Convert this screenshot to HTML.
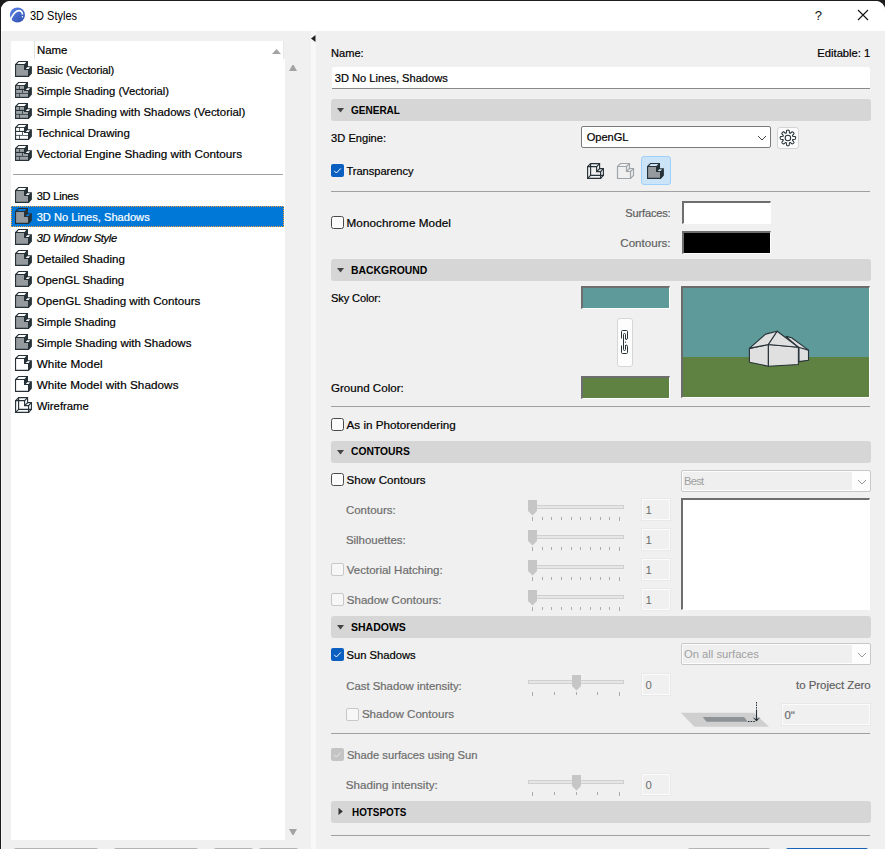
<!DOCTYPE html>
<html><head><meta charset="utf-8"><style>
html,body{margin:0;padding:0}
body{width:885px;height:849px;overflow:hidden;position:relative;background:#1c1c1c;font-family:"Liberation Sans",sans-serif}
.win{position:absolute;left:1px;top:1px;width:884px;height:848px;background:#f0f0f0;border-radius:9px 9px 0 0;overflow:hidden}
.a{position:absolute}
.t{position:absolute;white-space:pre;line-height:normal;-webkit-text-stroke:0.2px currentColor}
.b{-webkit-text-stroke:0}
.ic{position:absolute;overflow:visible}
.hdr{position:absolute;left:331px;width:540px;height:21.5px;background:#d6d6d6;border-radius:3px}
.sep{position:absolute;left:331px;width:539px;height:1px;background:#a0a0a0}
.cb{position:absolute;width:11px;height:11px;border:1px solid #4a4a4a;border-radius:2.5px;background:#fbfbfb}
.cbon{position:absolute;width:13px;height:13px;border-radius:2px;background:#0a5fc0}
.cbdis{position:absolute;width:11px;height:11px;border:1px solid #c8c8c8;border-radius:2px;background:#f7f7f7}
.track{position:absolute;width:94px;height:2px;background:#e6e6e6;border:1px solid #d0d0d0}
.tick{position:absolute;width:1px;background:#ababab}
.edit{position:absolute;box-sizing:border-box;border:1px solid #fbfbfb;background:#f0f0f0;box-shadow:0 0 0 1px #e9e9e9}
.tri{position:absolute;width:0;height:0}
</style></head><body>
<div class="win">
  <!-- title bar -->
  <div class="a" style="left:0;top:0;width:884px;height:30px;background:#fff"></div>
</div>
<div class="a" style="left:1px;top:31px;width:1px;height:818px;background:#f8f8f8"></div>
<!-- app icon -->
<svg class="ic" style="left:0;top:0" width="40" height="31" viewBox="0 0 40 31">
<defs><linearGradient id="g1" x1="0" y1="0" x2="1" y2="1"><stop offset="0" stop-color="#5a82e6"/><stop offset="1" stop-color="#2f4fae"/></linearGradient></defs>
<circle cx="17.45" cy="14.9" r="7.5" fill="url(#g1)"/>
<path d="M10.3,20C12.3,15.6 15.2,11 18.6,10.7C21.2,10.5 22.6,12.4 22.4,14.6" fill="none" stroke="#fff" stroke-width="1.7"/>
<circle cx="22.4" cy="16.7" r="0.8" fill="#fff"/>
</svg>
<!-- ? and X -->
<div class="t b" style="left:814.8px;top:8.23px;font-size:13px;color:#111">?</div>
<svg class="ic" style="left:857px;top:9px" width="12" height="12" viewBox="0 0 12 12"><path d="M1,1L11,11M11,1L1,11" stroke="#111" stroke-width="1.1"/></svg>

<!-- left list -->
<div class="a" style="left:11px;top:59px;width:274px;height:781px;background:#fff"></div>
<div class="a" style="left:11px;top:41px;width:272px;height:18px;background:#fff"></div>
<div class="a" style="left:283px;top:41px;width:1px;height:18px;background:#e8e8e8"></div>
<div class="a" style="left:34px;top:41px;width:1px;height:18px;background:#e3e3e3"></div>
<svg class="ic" style="left:271px;top:48px" width="11" height="7" viewBox="0 0 11 7"><path d="M1,6L5.5,1L10,6Z" fill="#a3a3a3"/></svg>
<svg class="ic" style="left:288px;top:64px" width="10" height="8" viewBox="0 0 10 8"><path d="M1,7L4.4,1.1H5.6L9,7Z" fill="#a3a3a3"/></svg>
<svg class="ic" style="left:288px;top:828px" width="10" height="8" viewBox="0 0 10 8"><path d="M1,1H9L5.6,6.9H4.4Z" fill="#a3a3a3"/></svg>
<div class="a" style="left:13px;top:174px;width:270px;height:1px;background:#a0a0a0"></div>
<div class="a" style="left:11px;top:206px;width:273px;height:21px;background:#0078d7;box-sizing:border-box;border:1px dotted #f7a13a"></div>
<!-- splitter -->
<div class="a" style="left:311px;top:31px;width:5px;height:818px;background:#f8f8f8"></div>
<svg class="ic" style="left:310px;top:34px" width="7" height="9" viewBox="0 0 7 9"><path d="M1,4.5L5.5,1V8Z" fill="#222"/></svg>
<!-- bottom buttons -->
<div class="a" style="left:14px;top:848px;width:84px;height:4px;background:#b4b4b4;border-radius:3px"></div>
<div class="a" style="left:114px;top:848px;width:84px;height:4px;background:#b4b4b4;border-radius:3px"></div>
<div class="a" style="left:214px;top:848px;width:39px;height:4px;background:#b4b4b4;border-radius:3px"></div>
<div class="a" style="left:259px;top:848px;width:39px;height:4px;background:#b4b4b4;border-radius:3px"></div>
<div class="a" style="left:688px;top:848px;width:82px;height:4px;background:#b4b4b4;border-radius:3px"></div>
<div class="a" style="left:786px;top:848px;width:82px;height:4px;background:#1a64b8;border-radius:3px"></div>

<!-- right panel -->
<div class="a" style="left:332px;top:67px;width:538px;height:21px;background:#fff;border-bottom:1px solid #8a8a8a;border-radius:2px 2px 0 0;box-sizing:content-box"></div>
<div class="hdr" style="top:99px"></div>
<svg class="ic" style="left:336px;top:107px" width="9" height="6" viewBox="0 0 9 6"><path d="M1,1H8L4.5,5.5Z" fill="#444"/></svg>
<!-- engine dropdown -->
<div class="a" style="left:581px;top:126px;width:188px;height:20px;background:#fff;border:1px solid #7a7a7a;border-radius:2px"></div>
<svg class="ic" style="left:757px;top:135px" width="10" height="6" viewBox="0 0 10 6"><path d="M1,1L5,5L9,1" fill="none" stroke="#444" stroke-width="1"/></svg>
<div class="a" style="left:777px;top:127px;width:20px;height:20px;background:#fcfcfc;border:1px solid #d4d4d4;border-radius:3px"></div>
<svg class="ic" style="left:776px;top:126px" width="24" height="24" viewBox="0 0 24 24" id="gear"><path d="M10.33,6.84L10.63,4.51Q11.90,3.50 13.17,4.51L13.47,6.84Q13.70,7.56 14.37,7.21L16.23,5.78Q17.84,5.96 18.02,7.57L16.59,9.43Q16.24,10.10 16.96,10.33L19.29,10.63Q20.30,11.90 19.29,13.17L16.96,13.47Q16.24,13.70 16.59,14.37L18.02,16.23Q17.84,17.84 16.23,18.02L14.37,16.59Q13.70,16.24 13.47,16.96L13.17,19.29Q11.90,20.30 10.63,19.29L10.33,16.96Q10.10,16.24 9.43,16.59L7.57,18.02Q5.96,17.84 5.78,16.23L7.21,14.37Q7.56,13.70 6.84,13.47L4.51,13.17Q3.50,11.90 4.51,10.63L6.84,10.33Q7.56,10.10 7.21,9.43L5.78,7.57Q5.96,5.96 7.57,5.78L9.43,7.21Q10.10,7.56 10.33,6.84Z" fill="none" stroke="#263238" stroke-width="1.05" stroke-linejoin="round"/><circle cx="11.9" cy="11.9" r="2.75" fill="none" stroke="#263238" stroke-width="1.05"/></svg>
<div class="cbon" style="left:331px;top:164px"><svg width="13" height="13" viewBox="0 0 13 13" style="position:absolute;left:0;top:0"><path d="M3.2,6.8L5.4,9L9.8,4.4" fill="none" stroke="#fff" stroke-width="1"/></svg></div>
<svg class="ic" style="left:584px;top:160px" width="24" height="24" viewBox="0 0 24 24"><g fill="none" stroke="#263238" stroke-width="1.15">
<path d="M3.6,6.6H12.6V11.6H16.6V18.4H3.6Z"/><path d="M6.6,3.6H15.6V8.6H19.4V15.4H6.6Z"/>
<path d="M3.6,6.6L6.6,3.6M12.6,6.6L15.6,3.6M12.6,11.6L15.6,8.6M16.6,11.6L19.4,8.6M16.6,18.4L19.4,15.4M3.6,18.4L6.6,15.4"/></g></svg><svg class="ic" style="left:614px;top:160px" width="24" height="24" viewBox="0 0 24 24"><g fill="none" stroke="#a0a5a9" stroke-width="1.2">
<path d="M3.5,6.5L6.5,3.5H15.5V8.5H19.5V15.5L16.5,18.5H3.5Z"/><path fill="none" d="M3.5,6.5H12.5V11.5H16.5V18.5M12.5,6.5L15.5,3.5M12.5,11.5L15.5,8.5M16.5,11.5L19.5,8.5"/></g></svg>
<div class="a" style="left:641px;top:156px;width:28px;height:27px;background:#cce4f7;border:1px solid #9fd0fb;border-radius:3px"></div>
<svg class="ic" style="left:644px;top:160px" width="24" height="24" viewBox="0 0 24 24"><path fill="#263238" d="M3,6.3L6.3,3H16V8.3H19.9V15.5L16.8,18.9H3Z"/>
<path fill="#cce4f7" d="M5.1,5.9L6.8,4.1H14.2L12.5,5.9Z"/><path fill="#cce4f7" d="M13.8,10.9L15.3,9.2H18.1L16.6,10.9Z"/><path fill="#959a9e" d="M4.1,6.9H12V12.1H16V17.8H4.1Z"/></svg>
<div class="sep" style="top:191px"></div>
<div class="cb" style="left:331px;top:216px"></div>
<div class="a" style="left:682px;top:201px;width:86px;height:20px;background:#fff;border-top:2px solid #6e6e6e;border-left:2px solid #6e6e6e;border-right:1px solid #fff;border-bottom:1px solid #fff"></div>
<div class="a" style="left:682px;top:231px;width:86px;height:20px;background:#000;border-top:2px solid #6e6e6e;border-left:2px solid #6e6e6e;border-right:1px solid #fff;border-bottom:1px solid #fff"></div>
<div class="hdr" style="top:259px"></div>
<svg class="ic" style="left:336px;top:267px" width="9" height="6" viewBox="0 0 9 6"><path d="M1,1H8L4.5,5.5Z" fill="#444"/></svg>
<div class="a" style="left:581px;top:286px;width:86px;height:19.5px;background:#5e9a9a;border-top:2px solid #6e6e6e;border-left:2px solid #6e6e6e;border-right:1px solid #fff;border-bottom:1px solid #fff"></div>
<div class="a" style="left:581px;top:376px;width:86px;height:19.5px;background:#5f8243;border-top:2px solid #6e6e6e;border-left:2px solid #6e6e6e;border-right:1px solid #fff;border-bottom:1px solid #fff"></div>
<div class="a" style="left:617px;top:318px;width:14px;height:47px;background:#fdfdfd;border:1px solid #d6d6d6;border-radius:3px"></div>
<svg class="ic" style="left:0;top:0" width="885" height="849" viewBox="0 0 885 849" id="overlay"></svg>
<div class="a" style="left:681px;top:286px;width:186px;height:109px;background:#5e9a9a;border-top:2px solid #6b6b6b;border-left:2px solid #6b6b6b;border-right:1px solid #fff;border-bottom:1px solid #fff;overflow:hidden">
  <div class="a" style="left:0;top:69px;width:186px;height:41px;background:#5f8243"></div>
</div>
<svg class="ic" style="left:0;top:0" width="885" height="849" viewBox="0 0 885 849">
<g fill="#e0e0e0" stroke="#263238" stroke-width="1.1" stroke-linejoin="round">
<path d="M787,337.5L786.2,336.4L791.6,337.7L808.5,350.1V360.3L799,361.6V348Z"/><path d="M798.4,347.3L808.5,350.1" fill="none"/>
<path d="M749.4,348.4L768.4,344.5V366.2L749.4,362.2Z"/>
<path d="M768.4,344.5L798.4,347.3V364.5L768.4,366.2Z"/>
<path d="M749.4,348.4L765.6,334.1L777.2,331.2L768.4,344.5Z"/>
<path d="M768.4,344.5L777.2,331.2L798.4,347.3Z"/>
</g>
<!-- chain -->
<g fill="none" stroke="#263238" stroke-width="1">
<path d="M621.5,338.5V331.5Q621.5,330.5 622.5,330.5H626.5Q627.5,330.5 627.5,331.5V338Q627.5,339.5 626,339.5"/>
<path d="M621.5,345.5V352.5Q621.5,353.5 622.5,353.5H626.5Q627.5,353.5 627.5,352.5V346.5Q627.5,345 626,345"/>
<path d="M625.5,339.5V334.5Q625.5,333.5 624.5,333.5Q623.5,333.5 623.5,334.5V349.5Q623.5,350.5 624.5,350.5Q625.5,350.5 625.5,349.5V345"/>
</g>
<circle cx="625.5" cy="342.2" r="0.6" fill="#263238"/>
</svg>
<div class="sep" style="top:406px"></div>
<div class="cb" style="left:331px;top:418px"></div>
<div class="hdr" style="top:441px"></div>
<svg class="ic" style="left:336px;top:449px" width="9" height="6" viewBox="0 0 9 6"><path d="M1,1H8L4.5,5.5Z" fill="#444"/></svg>
<div class="cb" style="left:331px;top:473px"></div>
<div class="a" style="left:681px;top:470px;width:188px;height:20px;background:#fdfdfd;border:1px solid #c8c8c8;border-radius:2px"></div>
<div class="a" style="left:683px;top:472px;width:169px;height:18px;background:#efefef"></div>
<svg class="ic" style="left:857px;top:479px" width="10" height="6" viewBox="0 0 10 6"><path d="M1,1L5,5L9,1" fill="none" stroke="#9a9a9a" stroke-width="1"/></svg>
<div class="a" style="left:681px;top:498px;width:186px;height:109px;background:#fff;border-top:2px solid #6e6e6e;border-left:2px solid #6e6e6e;border-right:1px solid #fff;border-bottom:1px solid #fff"></div>
<div class="cbdis" style="left:331px;top:563px"></div>
<div class="cbdis" style="left:331px;top:593px"></div>
<div class="track" style="left:528px;top:505px"></div><svg class="ic" style="left:528px;top:500px" width="9" height="16" viewBox="0 0 9 16"><path d="M0,0H9V11L4.5,15.5L0,11Z" fill="#c6c6c6"/></svg><div class="tick" style="left:532.0px;top:517px;height:3.5px"></div><div class="tick" style="left:542.0px;top:517px;height:2.5px"></div><div class="tick" style="left:551.0px;top:517px;height:2.5px"></div><div class="tick" style="left:561.0px;top:517px;height:2.5px"></div><div class="tick" style="left:571.0px;top:517px;height:2.5px"></div><div class="tick" style="left:580.0px;top:517px;height:2.5px"></div><div class="tick" style="left:590.0px;top:517px;height:2.5px"></div><div class="tick" style="left:600.0px;top:517px;height:2.5px"></div><div class="tick" style="left:609.0px;top:517px;height:2.5px"></div><div class="tick" style="left:619.0px;top:517px;height:3.5px"></div><div class="edit" style="left:642px;top:499px;width:28px;height:21px"></div><div class="track" style="left:528px;top:535px"></div><svg class="ic" style="left:528px;top:530px" width="9" height="16" viewBox="0 0 9 16"><path d="M0,0H9V11L4.5,15.5L0,11Z" fill="#c6c6c6"/></svg><div class="tick" style="left:532.0px;top:547px;height:3.5px"></div><div class="tick" style="left:542.0px;top:547px;height:2.5px"></div><div class="tick" style="left:551.0px;top:547px;height:2.5px"></div><div class="tick" style="left:561.0px;top:547px;height:2.5px"></div><div class="tick" style="left:571.0px;top:547px;height:2.5px"></div><div class="tick" style="left:580.0px;top:547px;height:2.5px"></div><div class="tick" style="left:590.0px;top:547px;height:2.5px"></div><div class="tick" style="left:600.0px;top:547px;height:2.5px"></div><div class="tick" style="left:609.0px;top:547px;height:2.5px"></div><div class="tick" style="left:619.0px;top:547px;height:3.5px"></div><div class="edit" style="left:642px;top:529px;width:28px;height:21px"></div><div class="track" style="left:528px;top:565px"></div><svg class="ic" style="left:528px;top:560px" width="9" height="16" viewBox="0 0 9 16"><path d="M0,0H9V11L4.5,15.5L0,11Z" fill="#c6c6c6"/></svg><div class="tick" style="left:532.0px;top:577px;height:3.5px"></div><div class="tick" style="left:542.0px;top:577px;height:2.5px"></div><div class="tick" style="left:551.0px;top:577px;height:2.5px"></div><div class="tick" style="left:561.0px;top:577px;height:2.5px"></div><div class="tick" style="left:571.0px;top:577px;height:2.5px"></div><div class="tick" style="left:580.0px;top:577px;height:2.5px"></div><div class="tick" style="left:590.0px;top:577px;height:2.5px"></div><div class="tick" style="left:600.0px;top:577px;height:2.5px"></div><div class="tick" style="left:609.0px;top:577px;height:2.5px"></div><div class="tick" style="left:619.0px;top:577px;height:3.5px"></div><div class="edit" style="left:642px;top:559px;width:28px;height:21px"></div><div class="track" style="left:528px;top:595px"></div><svg class="ic" style="left:528px;top:590px" width="9" height="16" viewBox="0 0 9 16"><path d="M0,0H9V11L4.5,15.5L0,11Z" fill="#c6c6c6"/></svg><div class="tick" style="left:532.0px;top:607px;height:3.5px"></div><div class="tick" style="left:542.0px;top:607px;height:2.5px"></div><div class="tick" style="left:551.0px;top:607px;height:2.5px"></div><div class="tick" style="left:561.0px;top:607px;height:2.5px"></div><div class="tick" style="left:571.0px;top:607px;height:2.5px"></div><div class="tick" style="left:580.0px;top:607px;height:2.5px"></div><div class="tick" style="left:590.0px;top:607px;height:2.5px"></div><div class="tick" style="left:600.0px;top:607px;height:2.5px"></div><div class="tick" style="left:609.0px;top:607px;height:2.5px"></div><div class="tick" style="left:619.0px;top:607px;height:3.5px"></div><div class="edit" style="left:642px;top:589px;width:28px;height:21px"></div><div class="track" style="left:528px;top:680px"></div><svg class="ic" style="left:572px;top:675px" width="9" height="16" viewBox="0 0 9 16"><path d="M0,0H9V11L4.5,15.5L0,11Z" fill="#c6c6c6"/></svg><div class="tick" style="left:532.0px;top:692px;height:3.5px"></div><div class="tick" style="left:554.0px;top:692px;height:2.5px"></div><div class="tick" style="left:576.0px;top:692px;height:2.5px"></div><div class="tick" style="left:597.0px;top:692px;height:2.5px"></div><div class="tick" style="left:619.0px;top:692px;height:3.5px"></div><div class="edit" style="left:642px;top:674px;width:28px;height:21px"></div><div class="track" style="left:528px;top:780px"></div><svg class="ic" style="left:572px;top:775px" width="9" height="16" viewBox="0 0 9 16"><path d="M0,0H9V11L4.5,15.5L0,11Z" fill="#c6c6c6"/></svg><div class="tick" style="left:532.0px;top:792px;height:3.5px"></div><div class="tick" style="left:554.0px;top:792px;height:2.5px"></div><div class="tick" style="left:576.0px;top:792px;height:2.5px"></div><div class="tick" style="left:597.0px;top:792px;height:2.5px"></div><div class="tick" style="left:619.0px;top:792px;height:3.5px"></div><div class="edit" style="left:642px;top:774px;width:28px;height:21px"></div>
<div class="hdr" style="top:616px"></div>
<svg class="ic" style="left:336px;top:624px" width="9" height="6" viewBox="0 0 9 6"><path d="M1,1H8L4.5,5.5Z" fill="#444"/></svg>
<div class="cbon" style="left:331px;top:648px"><svg width="13" height="13" viewBox="0 0 13 13" style="position:absolute;left:0;top:0"><path d="M3.2,6.8L5.4,9L9.8,4.4" fill="none" stroke="#fff" stroke-width="1"/></svg></div>
<div class="a" style="left:681px;top:643px;width:188px;height:20px;background:#fdfdfd;border:1px solid #c8c8c8;border-radius:2px"></div>
<div class="a" style="left:683px;top:645px;width:169px;height:18px;background:#efefef"></div>
<svg class="ic" style="left:857px;top:652px" width="10" height="6" viewBox="0 0 10 6"><path d="M1,1L5,5L9,1" fill="none" stroke="#9a9a9a" stroke-width="1"/></svg>
<div class="cbdis" style="left:346px;top:708px"></div>
<svg class="ic" style="left:0;top:0" width="885" height="849" viewBox="0 0 885 849">
<path d="M680.9,712.7H753.8L769.1,726.8H694.3Z" fill="#cfcfcf"/>
<path d="M702.8,716.9H744.1L747.7,721.7H706.4Z" fill="#8d9296"/>
<path d="M756.5,702V710" stroke="#263238" stroke-width="1" stroke-dasharray="1.5,1"/>
<path d="M756.5,710V720" stroke="#263238" stroke-width="1.1"/>
<path d="M748,721.5H755" stroke="#263238" stroke-width="1" stroke-dasharray="1.6,1"/>
<path d="M752.6,717.3L756.5,721.6L760.4,717.3L756.5,719.2Z" fill="#263238"/>
</svg>
<div class="edit" style="left:782px;top:704px;width:88px;height:21px"></div>
<div class="sep" style="top:733px"></div>
<div class="a" style="left:331px;top:748px;width:13px;height:13px;background:#c4c4c4;border-radius:2px"><svg width="13" height="13" viewBox="0 0 13 13" style="position:absolute;left:0;top:0"><path d="M3.2,6.8L5.4,9L9.8,4.4" fill="none" stroke="#e8e8e8" stroke-width="1"/></svg></div>
<div class="hdr" style="top:801px"></div>
<svg class="ic" style="left:337px;top:807px" width="7" height="9" viewBox="0 0 7 9"><path d="M1.5,0.8L5.8,4.4L1.5,8Z" fill="#333"/></svg>
<div class="sep" style="top:835px"></div>

<svg class="ic" style="left:12px;top:58px" width="24" height="24" viewBox="0 0 24 24"><path fill="#263238" d="M3,6.3L6.3,3H16V8.3H19.9V15.5L16.8,18.9H3Z"/>
<path fill="#fff" d="M5.1,5.9L6.8,4.1H14.2L12.5,5.9Z"/><path fill="#fff" d="M13.8,10.9L15.3,9.2H18.1L16.6,10.9Z"/><path fill="#959a9e" d="M4.1,6.9H12V12.1H16V17.8H4.1Z"/></svg><svg class="ic" style="left:12px;top:79px" width="24" height="24" viewBox="0 0 24 24"><path fill="#263238" d="M3,6.3L6.3,3H16V8.3H19.9V15.5L16.8,18.9H3Z"/>
<path fill="#fff" d="M5.1,5.9L6.8,4.1H14.2L12.5,5.9Z"/><path fill="#fff" d="M13.8,10.9L15.3,9.2H18.1L16.6,10.9Z"/><g fill="#9da2a6"><rect x="4.1" y="6.9" width="3.1" height="3"/><rect x="7.9" y="6.9" width="4.1" height="3"/>
<rect x="4.1" y="11" width="6.1" height="2.9"/><path d="M10.9,11H12V12.1H16V13.9H10.9Z"/>
<rect x="4.1" y="14.7" width="3.1" height="3.1"/><rect x="7.9" y="14.7" width="8.1" height="3.1"/></g></svg><svg class="ic" style="left:12px;top:100px" width="24" height="24" viewBox="0 0 24 24"><path fill="#263238" d="M3,6.3L6.3,3H16V8.3H19.9V15.5L16.8,18.9H3Z"/>
<path fill="#fff" d="M5.1,5.9L6.8,4.1H14.2L12.5,5.9Z"/><path fill="#fff" d="M13.8,10.9L15.3,9.2H18.1L16.6,10.9Z"/><g fill="#9da2a6"><rect x="4.1" y="6.9" width="3.1" height="3"/><rect x="7.9" y="6.9" width="4.1" height="3"/>
<rect x="4.1" y="11" width="6.1" height="2.9"/><path d="M10.9,11H12V12.1H16V13.9H10.9Z"/>
<rect x="4.1" y="14.7" width="3.1" height="3.1"/><rect x="7.9" y="14.7" width="8.1" height="3.1"/></g></svg><svg class="ic" style="left:12px;top:121px" width="24" height="24" viewBox="0 0 24 24"><path fill="#263238" d="M3,6.3L6.3,3H16V8.3H19.9V15.5L16.8,18.9H3Z"/>
<path fill="#fff" d="M5.1,5.9L6.8,4.1H14.2L12.5,5.9Z"/><path fill="#fff" d="M13.8,10.9L15.3,9.2H18.1L16.6,10.9Z"/><g fill="#fff"><rect x="4.1" y="6.9" width="3.1" height="3"/><rect x="7.9" y="6.9" width="4.1" height="3"/>
<rect x="4.1" y="11" width="6.1" height="2.9"/><path d="M10.9,11H12V12.1H16V13.9H10.9Z"/>
<rect x="4.1" y="14.7" width="3.1" height="3.1"/><rect x="7.9" y="14.7" width="8.1" height="3.1"/></g></svg><svg class="ic" style="left:12px;top:142px" width="24" height="24" viewBox="0 0 24 24"><path fill="#263238" d="M3,6.3L6.3,3H16V8.3H19.9V15.5L16.8,18.9H3Z"/>
<path fill="#fff" d="M5.1,5.9L6.8,4.1H14.2L12.5,5.9Z"/><path fill="#fff" d="M13.8,10.9L15.3,9.2H18.1L16.6,10.9Z"/><g fill="#9da2a6"><rect x="4.1" y="6.9" width="3.1" height="3"/><rect x="7.9" y="6.9" width="4.1" height="3"/>
<rect x="4.1" y="11" width="6.1" height="2.9"/><path d="M10.9,11H12V12.1H16V13.9H10.9Z"/>
<rect x="4.1" y="14.7" width="3.1" height="3.1"/><rect x="7.9" y="14.7" width="8.1" height="3.1"/></g></svg><svg class="ic" style="left:12px;top:184px" width="24" height="24" viewBox="0 0 24 24"><path fill="#263238" d="M3,6.3L6.3,3H16V8.3H19.9V15.5L16.8,18.9H3Z"/>
<path fill="#fff" d="M5.1,5.9L6.8,4.1H14.2L12.5,5.9Z"/><path fill="#fff" d="M13.8,10.9L15.3,9.2H18.1L16.6,10.9Z"/><path fill="#959a9e" d="M4.1,6.9H12V12.1H16V17.8H4.1Z"/></svg><svg class="ic" style="left:12px;top:205px" width="24" height="24" viewBox="0 0 24 24"><path fill="#263238" d="M3,6.3L6.3,3H16V8.3H19.9V15.5L16.8,18.9H3Z"/>
<path fill="#0078d7" d="M5.1,5.9L6.8,4.1H14.2L12.5,5.9Z"/><path fill="#0078d7" d="M13.8,10.9L15.3,9.2H18.1L16.6,10.9Z"/><path fill="#959a9e" d="M4.1,6.9H12V12.1H16V17.8H4.1Z"/></svg><svg class="ic" style="left:12px;top:226px" width="24" height="24" viewBox="0 0 24 24"><path fill="#263238" d="M3,6.3L6.3,3H16V8.3H19.9V15.5L16.8,18.9H3Z"/>
<path fill="#fff" d="M5.1,5.9L6.8,4.1H14.2L12.5,5.9Z"/><path fill="#fff" d="M13.8,10.9L15.3,9.2H18.1L16.6,10.9Z"/><path fill="#959a9e" d="M4.1,6.9H12V12.1H16V17.8H4.1Z"/></svg><svg class="ic" style="left:12px;top:247px" width="24" height="24" viewBox="0 0 24 24"><path fill="#263238" d="M3,6.3L6.3,3H16V8.3H19.9V15.5L16.8,18.9H3Z"/>
<path fill="#fff" d="M5.1,5.9L6.8,4.1H14.2L12.5,5.9Z"/><path fill="#fff" d="M13.8,10.9L15.3,9.2H18.1L16.6,10.9Z"/><path fill="#959a9e" d="M4.1,6.9H12V12.1H16V17.8H4.1Z"/></svg><svg class="ic" style="left:12px;top:268px" width="24" height="24" viewBox="0 0 24 24"><path fill="#263238" d="M3,6.3L6.3,3H16V8.3H19.9V15.5L16.8,18.9H3Z"/>
<path fill="#fff" d="M5.1,5.9L6.8,4.1H14.2L12.5,5.9Z"/><path fill="#fff" d="M13.8,10.9L15.3,9.2H18.1L16.6,10.9Z"/><path fill="#959a9e" d="M4.1,6.9H12V12.1H16V17.8H4.1Z"/></svg><svg class="ic" style="left:12px;top:289px" width="24" height="24" viewBox="0 0 24 24"><path fill="#263238" d="M3,6.3L6.3,3H16V8.3H19.9V15.5L16.8,18.9H3Z"/>
<path fill="#fff" d="M5.1,5.9L6.8,4.1H14.2L12.5,5.9Z"/><path fill="#fff" d="M13.8,10.9L15.3,9.2H18.1L16.6,10.9Z"/><path fill="#959a9e" d="M4.1,6.9H12V12.1H16V17.8H4.1Z"/></svg><svg class="ic" style="left:12px;top:310px" width="24" height="24" viewBox="0 0 24 24"><path fill="#263238" d="M3,6.3L6.3,3H16V8.3H19.9V15.5L16.8,18.9H3Z"/>
<path fill="#fff" d="M5.1,5.9L6.8,4.1H14.2L12.5,5.9Z"/><path fill="#fff" d="M13.8,10.9L15.3,9.2H18.1L16.6,10.9Z"/><path fill="#959a9e" d="M4.1,6.9H12V12.1H16V17.8H4.1Z"/></svg><svg class="ic" style="left:12px;top:331px" width="24" height="24" viewBox="0 0 24 24"><path fill="#263238" d="M3,6.3L6.3,3H16V8.3H19.9V15.5L16.8,18.9H3Z"/>
<path fill="#fff" d="M5.1,5.9L6.8,4.1H14.2L12.5,5.9Z"/><path fill="#fff" d="M13.8,10.9L15.3,9.2H18.1L16.6,10.9Z"/><path fill="#959a9e" d="M4.1,6.9H12V12.1H16V17.8H4.1Z"/></svg><svg class="ic" style="left:12px;top:352px" width="24" height="24" viewBox="0 0 24 24"><path fill="#263238" d="M3,6.3L6.3,3H16V8.3H19.9V15.5L16.8,18.9H3Z"/>
<path fill="#fff" d="M5.1,5.9L6.8,4.1H14.2L12.5,5.9Z"/><path fill="#fff" d="M13.8,10.9L15.3,9.2H18.1L16.6,10.9Z"/><path fill="#fff" d="M4.1,6.9H12V12.1H16V17.8H4.1Z"/></svg><svg class="ic" style="left:12px;top:373px" width="24" height="24" viewBox="0 0 24 24"><path fill="#263238" d="M3,6.3L6.3,3H16V8.3H19.9V15.5L16.8,18.9H3Z"/>
<path fill="#fff" d="M5.1,5.9L6.8,4.1H14.2L12.5,5.9Z"/><path fill="#fff" d="M13.8,10.9L15.3,9.2H18.1L16.6,10.9Z"/><path fill="#fff" d="M4.1,6.9H12V12.1H16V17.8H4.1Z"/></svg><svg class="ic" style="left:12px;top:394px" width="24" height="24" viewBox="0 0 24 24"><g fill="none" stroke="#263238" stroke-width="1.15">
<path d="M3.6,6.6H12.6V11.6H16.6V18.4H3.6Z"/><path d="M6.6,3.6H15.6V8.6H19.4V15.4H6.6Z"/>
<path d="M3.6,6.6L6.6,3.6M12.6,6.6L15.6,3.6M12.6,11.6L15.6,8.6M16.6,11.6L19.4,8.6M16.6,18.4L19.4,15.4M3.6,18.4L6.6,15.4"/></g></svg>
<div class="t" style="left:36.70px;top:64.00px;font-size:11.1px;color:#000;font-weight:normal;font-style:normal;letter-spacing:-0.165px">Basic (Vectorial)</div><div class="t" style="left:36.70px;top:85.00px;font-size:11.23px;color:#000;font-weight:normal;font-style:normal;letter-spacing:0.000px">Simple Shading (Vectorial)</div><div class="t" style="left:36.70px;top:106.00px;font-size:11.44px;color:#000;font-weight:normal;font-style:normal;letter-spacing:0.000px">Simple Shading with Shadows (Vectorial)</div><div class="t" style="left:36.70px;top:127.00px;font-size:11.49px;color:#000;font-weight:normal;font-style:normal;letter-spacing:0.000px">Technical Drawing</div><div class="t" style="left:36.70px;top:147.00px;font-size:11.69px;color:#000;font-weight:normal;font-style:normal;letter-spacing:0.000px">Vectorial Engine Shading with Contours</div><div class="t" style="left:36.70px;top:190.00px;font-size:11.1px;color:#000;font-weight:normal;font-style:normal;letter-spacing:-0.239px">3D Lines</div><div class="t" style="left:36.70px;top:211.00px;font-size:11.12px;color:#fff;font-weight:normal;font-style:normal;letter-spacing:0.000px">3D No Lines, Shadows</div><div class="t" style="left:36.70px;top:232.00px;font-size:11.1px;color:#000;font-weight:normal;font-style:italic;letter-spacing:-0.275px">3D Window Style</div><div class="t" style="left:36.70px;top:253.00px;font-size:11.58px;color:#000;font-weight:normal;font-style:normal;letter-spacing:-0.000px">Detailed Shading</div><div class="t" style="left:36.70px;top:274.00px;font-size:11.39px;color:#000;font-weight:normal;font-style:normal;letter-spacing:0.000px">OpenGL Shading</div><div class="t" style="left:36.70px;top:294.00px;font-size:11.64px;color:#000;font-weight:normal;font-style:normal;letter-spacing:0.000px">OpenGL Shading with Contours</div><div class="t" style="left:36.70px;top:316.00px;font-size:11.31px;color:#000;font-weight:normal;font-style:normal;letter-spacing:0.000px">Simple Shading</div><div class="t" style="left:36.70px;top:337.00px;font-size:11.51px;color:#000;font-weight:normal;font-style:normal;letter-spacing:0.000px">Simple Shading with Shadows</div><div class="t" style="left:36.70px;top:357.00px;font-size:11.7px;color:#000;font-weight:normal;font-style:normal;letter-spacing:0.098px">White Model</div><div class="t" style="left:36.70px;top:378.00px;font-size:11.7px;color:#000;font-weight:normal;font-style:normal;letter-spacing:0.064px">White Model with Shadows</div><div class="t" style="left:36.70px;top:400.00px;font-size:11.3px;color:#000;font-weight:normal;font-style:normal;letter-spacing:0.000px">Wireframe</div><div class="t" style="left:37.00px;top:44.00px;font-size:11.43px;color:#000;font-weight:normal;font-style:normal;letter-spacing:0.000px">Name</div><div class="t b" style="transform:scaleX(0.88);transform-origin:0 0;left:30.20px;top:9.00px;font-size:12.5px;color:#000;font-weight:normal;font-style:normal;letter-spacing:0.000px">3D Styles</div><div class="t" style="left:331.10px;top:47.00px;font-size:11.1px;color:#000;font-weight:normal;font-style:normal;letter-spacing:-0.039px">Name:</div><div class="t" style="right:14.70px;top:47.00px;font-size:11.22px;color:#000;font-weight:normal;font-style:normal;letter-spacing:0.000px">Editable: 1</div><div class="t" style="left:334.80px;top:72.00px;font-size:11.11px;color:#000;font-weight:normal;font-style:normal;letter-spacing:0.000px">3D No Lines, Shadows</div><div class="t b" style="transform:scaleX(0.864);transform-origin:0 0;left:351.00px;top:103.00px;font-size:11.6px;color:#000;font-weight:bold;font-style:normal;letter-spacing:0.000px">GENERAL</div><div class="t" style="left:331.10px;top:132.00px;font-size:11.11px;color:#000;font-weight:normal;font-style:normal;letter-spacing:0.000px">3D Engine:</div><div class="t" style="left:586.80px;top:131.00px;font-size:11.1px;color:#000;font-weight:normal;font-style:normal;letter-spacing:-0.077px">OpenGL</div><div class="t" style="left:346.50px;top:165.00px;font-size:11.1px;color:#000;font-weight:normal;font-style:normal;letter-spacing:-0.038px">Transparency</div><div class="t" style="left:346.50px;top:216.00px;font-size:11.7px;color:#000;font-weight:normal;font-style:normal;letter-spacing:0.075px">Monochrome Model</div><div class="t" style="right:214.50px;top:207.00px;font-size:11.1px;color:#5f5f5f;font-weight:normal;font-style:normal;letter-spacing:-0.188px">Surfaces:</div><div class="t" style="right:214.50px;top:237.00px;font-size:11.58px;color:#5f5f5f;font-weight:normal;font-style:normal;letter-spacing:0.000px">Contours:</div><div class="t b" style="transform:scaleX(0.897);transform-origin:0 0;left:351.30px;top:263.00px;font-size:11.6px;color:#000;font-weight:bold;font-style:normal;letter-spacing:0.000px">BACKGROUND</div><div class="t" style="left:331.00px;top:292.00px;font-size:11.1px;color:#000;font-weight:normal;font-style:normal;letter-spacing:-0.140px">Sky Color:</div><div class="t" style="left:331.00px;top:382.00px;font-size:11.59px;color:#000;font-weight:normal;font-style:normal;letter-spacing:0.000px">Ground Color:</div><div class="t" style="left:346.50px;top:418.00px;font-size:11.7px;color:#000;font-weight:normal;font-style:normal;letter-spacing:0.006px">As in Photorendering</div><div class="t b" style="transform:scaleX(0.889);transform-origin:0 0;left:351.10px;top:444.00px;font-size:11.6px;color:#000;font-weight:bold;font-style:normal;letter-spacing:0.000px">CONTOURS</div><div class="t" style="left:346.50px;top:474.00px;font-size:11.58px;color:#000;font-weight:normal;font-style:normal;letter-spacing:0.000px">Show Contours</div><div class="t b" style="left:684.00px;top:475.00px;font-size:11.1px;color:#a0a0a0;font-weight:normal;font-style:normal;letter-spacing:-0.679px">Best</div><div class="t" style="left:345.90px;top:504.00px;font-size:11.49px;color:#6d6d6d;font-weight:normal;font-style:normal;letter-spacing:0.000px">Contours:</div><div class="t" style="left:345.90px;top:534.00px;font-size:11.44px;color:#6d6d6d;font-weight:normal;font-style:normal;letter-spacing:0.000px">Silhouettes:</div><div class="t" style="left:346.80px;top:564.00px;font-size:11.51px;color:#6d6d6d;font-weight:normal;font-style:normal;letter-spacing:0.000px">Vectorial Hatching:</div><div class="t" style="left:346.80px;top:594.00px;font-size:11.52px;color:#6d6d6d;font-weight:normal;font-style:normal;letter-spacing:0.000px">Shadow Contours:</div><div class="t b" style="left:645.40px;top:504.00px;font-size:11.4px;color:#6d6d6d;font-weight:normal;font-style:normal;letter-spacing:0.000px">1</div><div class="t b" style="left:645.40px;top:534.00px;font-size:11.4px;color:#6d6d6d;font-weight:normal;font-style:normal;letter-spacing:0.000px">1</div><div class="t b" style="left:645.40px;top:564.00px;font-size:11.4px;color:#6d6d6d;font-weight:normal;font-style:normal;letter-spacing:0.000px">1</div><div class="t b" style="left:645.40px;top:594.00px;font-size:11.4px;color:#6d6d6d;font-weight:normal;font-style:normal;letter-spacing:0.000px">1</div><div class="t b" style="transform:scaleX(0.906);transform-origin:0 0;left:351.00px;top:620.00px;font-size:11.6px;color:#000;font-weight:bold;font-style:normal;letter-spacing:0.000px">SHADOWS</div><div class="t" style="left:346.50px;top:649.00px;font-size:11.23px;color:#000;font-weight:normal;font-style:normal;letter-spacing:0.000px">Sun Shadows</div><div class="t b" style="left:684.00px;top:648.00px;font-size:11.22px;color:#a0a0a0;font-weight:normal;font-style:normal;letter-spacing:0.000px">On all surfaces</div><div class="t" style="left:346.20px;top:680.00px;font-size:11.37px;color:#6d6d6d;font-weight:normal;font-style:normal;letter-spacing:0.000px">Cast Shadow intensity:</div><div class="t b" style="left:645.40px;top:679.00px;font-size:11.4px;color:#6d6d6d;font-weight:normal;font-style:normal;letter-spacing:0.000px">0</div><div class="t" style="right:14.30px;top:679.00px;font-size:11.4px;color:#5f5f5f;font-weight:normal;font-style:normal;letter-spacing:-0.000px">to Project Zero</div><div class="t" style="left:361.90px;top:707.00px;font-size:11.6px;color:#6d6d6d;font-weight:normal;font-style:normal;letter-spacing:0.000px">Shadow Contours</div><div class="t" style="left:784.40px;top:709.00px;font-size:11.4px;color:#6d6d6d;font-weight:normal;font-style:normal;letter-spacing:0.000px">0ʺ</div><div class="t" style="left:346.90px;top:749.00px;font-size:11.19px;color:#6d6d6d;font-weight:normal;font-style:normal;letter-spacing:0.000px">Shade surfaces using Sun</div><div class="t" style="left:345.80px;top:778.00px;font-size:11.65px;color:#6d6d6d;font-weight:normal;font-style:normal;letter-spacing:0.000px">Shading intensity:</div><div class="t b" style="left:645.40px;top:779.00px;font-size:11.4px;color:#6d6d6d;font-weight:normal;font-style:normal;letter-spacing:0.000px">0</div><div class="t b" style="transform:scaleX(0.851);transform-origin:0 0;left:351.50px;top:805.00px;font-size:11.6px;color:#000;font-weight:bold;font-style:normal;letter-spacing:0.000px">HOTSPOTS</div>
</body></html>
